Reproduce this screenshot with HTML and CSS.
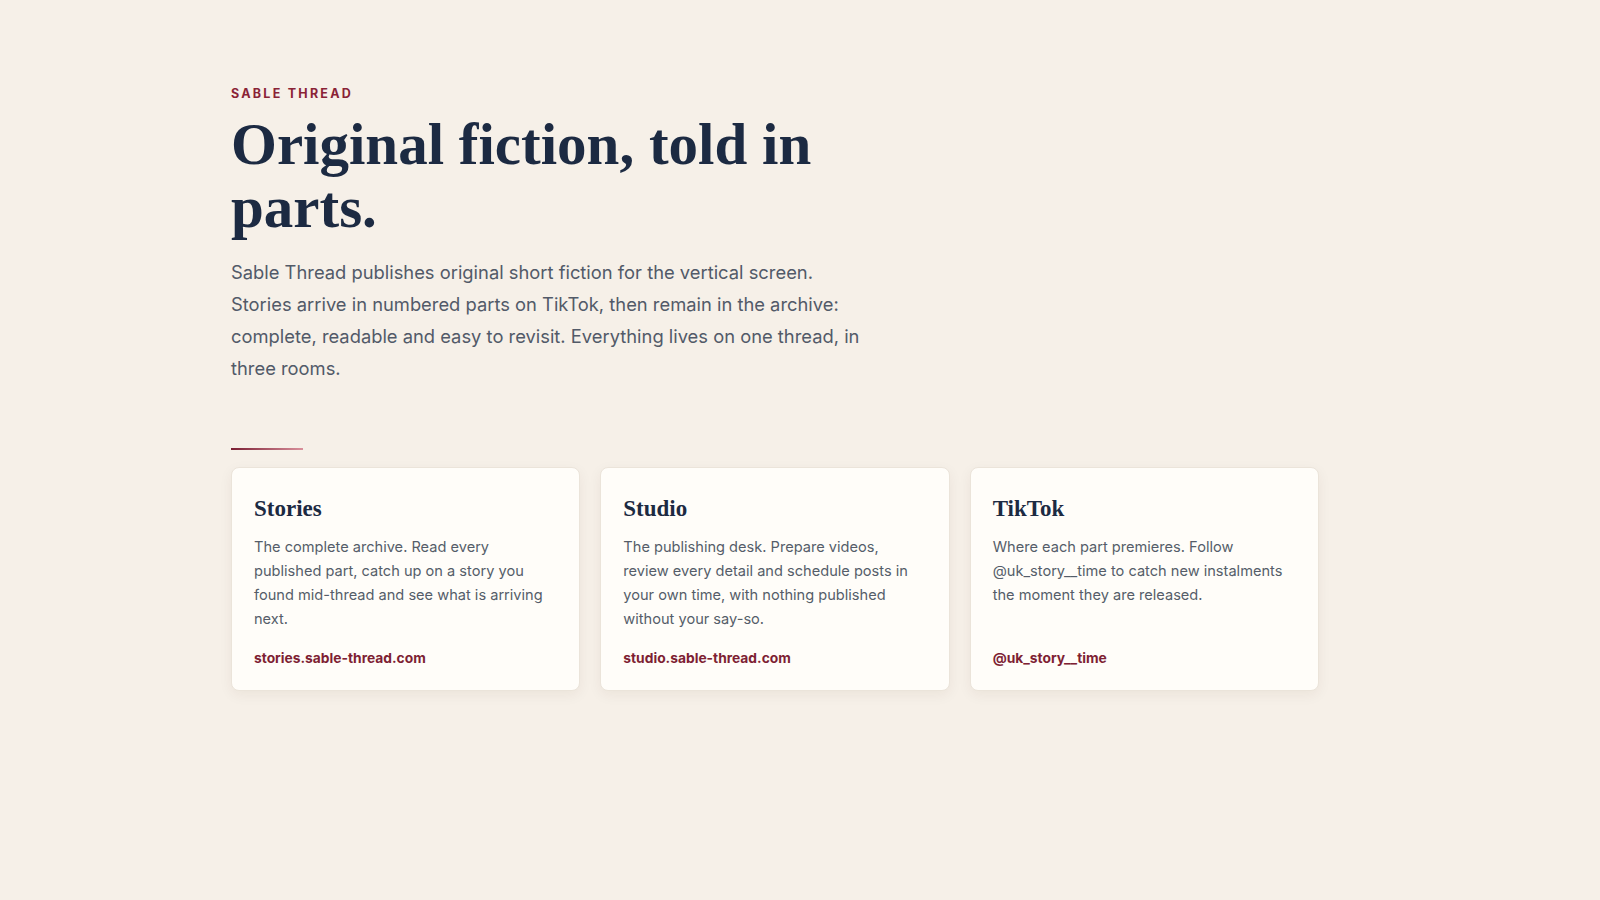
FILE: index.html
```html
<!DOCTYPE html>
<html lang="en">
<head>
  <meta charset="UTF-8" />
  <meta name="viewport" content="width=device-width, initial-scale=1.0"/>
  <title>Sable Thread</title>
  <link rel="stylesheet" href="styles.css">
</head>

<body>
  <main class="wrap">
    <header class="intro">
      <div class="eyebrow">Sable Thread</div>
      <h1>Original fiction, told in parts.</h1>
      <p>Sable Thread publishes original short fiction for the vertical screen. Stories arrive in numbered parts on TikTok, then remain in the archive: complete, readable and easy to revisit. Everything lives on one thread, in three rooms.</p>
    </header>

    <div class="rule"></div>

    <section class="rooms">
      <a class="room" href="#">
        <h2>Stories</h2>
        <p>The complete archive. Read every published part, catch up on a story you found mid-thread and see what is arriving next.</p>
        <span class="room-link">stories.sable-thread.com</span>
      </a>

      <a class="room" href="#">
        <h2>Studio</h2>
        <p>The publishing desk. Prepare videos, review every detail and schedule posts in your own time, with nothing published without your say-so.</p>
        <span class="room-link">studio.sable-thread.com</span>
      </a>

      <a class="room" href="#">
        <h2>TikTok</h2>
        <p>Where each part premieres. Follow @uk_story__time to catch new instalments the moment they are released.</p>
        <span class="room-link">@uk_story__time</span>
      </a>
    </section>
  </main>
</body>
</html>
```

FILE: styles.css
```css
* {
  box-sizing: border-box;
}

body {
  margin: 0;
  font-family: 'Inter', 'Noto Sans', sans-serif;
  background: #f6f0e8;
  color: #1c2a42;
}

.wrap {
  max-width: 1140px;
  margin: 0 auto;
  padding: 86px 0 80px 1px;
}

.eyebrow {
  font-size: 12.5px;
  font-weight: 700;
  letter-spacing: 0.18em;
  text-transform: uppercase;
  color: #8a2336;
  line-height: 15px;
}

.intro h1 {
  font-family: 'Liberation Serif', 'DejaVu Serif', serif;
  font-weight: 700;
  font-size: 59px;
  line-height: 63px;
  color: #1c2a42;
  margin: 12px 0 17px;
  max-width: 700px;
}

.intro p {
  font-size: 18.35px;
  line-height: 32px;
  color: #525a68;
  max-width: 636px;
  margin: 0;
}

.rule {
  width: 72px;
  height: 2px;
  margin: 64px 0 17px;
  background: linear-gradient(90deg, #7a1f33, #d9909b);
}

.rooms {
  max-width: 1088px;
  display: grid;
  grid-template-columns: repeat(3, 1fr);
  gap: 20px;
}

.room {
  display: flex;
  flex-direction: column;
  background: #fffdf9;
  border: 1px solid #ebe4da;
  border-radius: 8px;
  padding: 25px 22px 21px;
  box-shadow: 0 4px 14px rgba(60, 40, 20, 0.06);
  text-decoration: none;
  color: inherit;
}

.room h2 {
  font-family: 'Liberation Serif', 'DejaVu Serif', serif;
  font-size: 23px;
  font-weight: 700;
  line-height: 1.4;
  margin: 0 0 10px;
  color: #1c2a42;
}

.room p {
  font-size: 14.6px;
  line-height: 24px;
  color: #555d69;
  margin: 0;
}

.room-link {
  margin-top: auto;
  padding-top: 17px;
  font-size: 13.8px;
  font-weight: 700;
  line-height: 21px;
  color: #7e1f34;
}
```
